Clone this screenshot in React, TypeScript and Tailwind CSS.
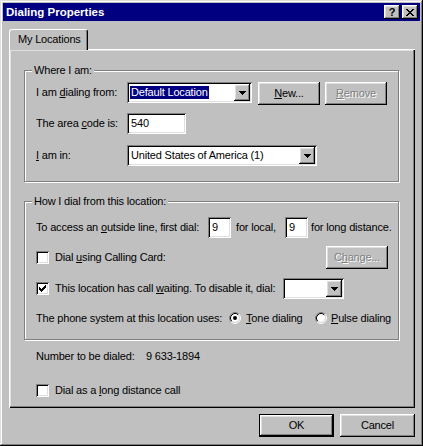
import React from "react";

const RAISED =
  "shadow-[inset_-1px_-1px_#000,inset_1px_1px_#fff,inset_-2px_-2px_#808080,inset_2px_2px_#dfdfdf]";
const SUNKEN =
  "shadow-[inset_1px_1px_#808080,inset_-1px_-1px_#fff,inset_2px_2px_#000,inset_-2px_-2px_#dfdfdf]";

const ARROW = ["XXXXXXX", ".XXXXX.", "..XXX..", "...X..."];
const CHECK = [
  "......X",
  ".....XX",
  "X...XXX",
  "XX.XXX.",
  "XXXXX..",
  ".XXX...",
  "..X....",
];
const XG = [
  "XX....XX",
  ".XX..XX.",
  "..XXXX..",
  "...XX...",
  "..XXXX..",
  ".XX..XX.",
  "XX....XX",
];

function Pix({ rows, color = "#000" }: { rows: string[]; color?: string }) {
  const w = rows[0].length;
  const h = rows.length;
  return (
    <svg width={w} height={h} viewBox={`0 0 ${w} ${h}`} shapeRendering="crispEdges">
      {rows.flatMap((r, y) =>
        r.split("").map((c, x) =>
          c === "X" ? <rect key={`${x}-${y}`} x={x} y={y} width={1} height={1} fill={color} /> : null
        )
      )}
    </svg>
  );
}

function TitleBtn({ children, className = "" }: { children: React.ReactNode; className?: string }) {
  return (
    <div
      className={`w-[16px] h-[14px] bg-[#c0c0c0] ${RAISED} flex items-center justify-center ${className}`}
    >
      {children}
    </div>
  );
}

function Btn({
  w,
  children,
  disabled,
  def,
  className = "",
}: {
  w: string;
  children: React.ReactNode;
  disabled?: boolean;
  def?: boolean;
  className?: string;
}) {
  const bevel = def
    ? "shadow-[inset_0_0_0_1px_#000,inset_-2px_-2px_#000,inset_2px_2px_#fff,inset_-3px_-3px_#808080,inset_3px_3px_#dfdfdf]"
    : RAISED;
  return (
    <div
      className={`${w} h-[23px] shrink-0 bg-[#c0c0c0] ${bevel} flex items-center justify-center ${
        disabled ? "text-[#808080] [text-shadow:1px_1px_0_#fff]" : "text-black"
      } ${className}`}
    >
      <span>{children}</span>
    </div>
  );
}

function Edit({ w, children }: { w: string; children?: React.ReactNode }) {
  return (
    <div className={`${w} h-[21px] shrink-0 bg-white ${SUNKEN} flex items-center pl-[4px]`}>
      {children}
    </div>
  );
}

function Combo({ w, children }: { w: string; children?: React.ReactNode }) {
  return (
    <div className={`${w} h-[21px] shrink-0 bg-white ${SUNKEN} p-[2px] flex`}>
      <div className="flex-1 flex items-center pl-[1px] overflow-hidden whitespace-nowrap">
        {children}
      </div>
      <div className={`w-[16px] h-full bg-[#c0c0c0] ${RAISED} flex items-center justify-center`}>
        <Pix rows={ARROW} />
      </div>
    </div>
  );
}

function Checkbox({ checked }: { checked?: boolean }) {
  return (
    <div className={`w-[13px] h-[13px] shrink-0 bg-white ${SUNKEN} flex items-center justify-center`}>
      {checked ? <Pix rows={CHECK} /> : null}
    </div>
  );
}

function Radio({ checked }: { checked?: boolean }) {
  return (
    <svg width="12" height="12" viewBox="0 0 12 12" className="shrink-0">
      <path d="M2.11 9.89 A5.5 5.5 0 0 1 9.89 2.11" stroke="#808080" fill="none" />
      <path d="M9.89 2.11 A5.5 5.5 0 0 1 2.11 9.89" stroke="#fff" fill="none" />
      <circle cx="6" cy="6" r="4" fill="#fff" />
      <path d="M2.82 9.18 A4.5 4.5 0 0 1 9.18 2.82" stroke="#000" fill="none" />
      <path d="M9.18 2.82 A4.5 4.5 0 0 1 2.82 9.18" stroke="#dfdfdf" fill="none" />
      {checked ? <circle cx="6" cy="6" r="2" fill="#000" /> : null}
    </svg>
  );
}

function Group({
  label,
  className = "",
  children,
}: {
  label: string;
  className?: string;
  children: React.ReactNode;
}) {
  return (
    <div
      className={`relative w-[375px] border border-[#808080] shadow-[inset_1px_1px_#fff,1px_1px_#fff] ${className}`}
    >
      <span className="absolute left-[7px] -top-[7px] px-[2px] bg-[#c0c0c0] leading-[13px] whitespace-nowrap">
        {label}
      </span>
      {children}
    </div>
  );
}

function Label({ w, children }: { w: string; children: React.ReactNode }) {
  return <div className={`${w} h-[21px] shrink-0 flex items-center whitespace-nowrap`}>{children}</div>;
}

export default function App() {
  return (
    <div
      className={`font-['Liberation_Sans',Arial,sans-serif] text-[11px] leading-[13px] tracking-[-0.18px] text-black w-[423px] h-[446px] bg-[#c0c0c0] p-[3px] shadow-[inset_-1px_-1px_#000,inset_1px_1px_#dfdfdf,inset_-2px_-2px_#808080,inset_2px_2px_#fff] flex flex-col`}
    >
      {/* Title bar */}
      <div className="h-[18px] shrink-0 bg-[#000080] flex items-center pl-[3px] pr-[2px]">
        <span className="text-white font-bold text-[11.5px] tracking-normal flex-1 whitespace-nowrap">
          Dialing Properties
        </span>
        <TitleBtn>
          <span className="font-bold text-[11px] leading-[11px] tracking-normal text-black">?</span>
        </TitleBtn>
        <TitleBtn className="ml-[2px]">
          <Pix rows={XG} />
        </TitleBtn>
      </div>

      <div className="pl-[6px] pr-[5px] mt-[8px] flex flex-col">
        {/* Tab */}
        <div className="relative z-10 -mb-px h-[21px] w-[79px] bg-[#c0c0c0] border-l border-t border-r border-l-white border-t-white border-r-black rounded-t-[3px] shadow-[inset_-1px_0_#808080] flex items-center pl-[8px] pb-[1px]">
          My Locations
        </div>

        {/* Panel */}
        <div className="h-[359px] bg-[#c0c0c0] shadow-[inset_1px_1px_#fff,inset_-1px_-1px_#000,inset_-2px_-2px_#808080,inset_2px_2px_#dfdfdf] pl-[15px] pt-[21px] flex flex-col">
          <Group label="Where I am:" className="h-[112px] pl-[11px] pt-[11px]">
            <div className="flex items-start">
              <Label w="w-[91px]">
                <span>
                  I am <u>d</u>ialing from:
                </span>
              </Label>
              <Combo w="w-[125px]">
                <span className="bg-[#000080] text-white px-[1px] h-[13px] leading-[13px]">
                  Default Location
                </span>
              </Combo>
              <Btn w="w-[62px]" className="ml-[6px]">
                <u>N</u>ew...
              </Btn>
              <Btn w="w-[62px]" className="ml-[5px]" disabled>
                <u>R</u>emove
              </Btn>
            </div>
            <div className="flex items-start mt-[8px]">
              <Label w="w-[91px]">
                <span>
                  The area <u>c</u>ode is:
                </span>
              </Label>
              <Edit w="w-[59px]">540</Edit>
            </div>
            <div className="flex items-start mt-[11px]">
              <Label w="w-[91px]">
                <span>
                  <u>I</u> am in:
                </span>
              </Label>
              <Combo w="w-[190px]">
                <span className="pl-[1px]">United States of America (1)</span>
              </Combo>
            </div>
          </Group>

          <Group
            label="How I dial from this location:"
            className="mt-[19px] h-[139px] pl-[11px] pr-[10px] pt-[15px]"
          >
            <div className="flex items-center h-[21px]">
              <span className="w-[172px] shrink-0 whitespace-nowrap">
                To access an <u>o</u>utside line, first dial:
              </span>
              <Edit w="w-[23px]">9</Edit>
              <span className="ml-[5px] w-[49px] shrink-0 whitespace-nowrap">for local,</span>
              <Edit w="w-[23px]">9</Edit>
              <span className="ml-[3px] whitespace-nowrap">for long distance.</span>
            </div>
            <div className="flex items-center h-[23px] mt-[8px]">
              <Checkbox />
              <span className="ml-[6px] flex-1 whitespace-nowrap">
                Dial <u>u</u>sing Calling Card:
              </span>
              <Btn w="w-[62px]" disabled>
                C<u>h</u>ange...
              </Btn>
            </div>
            <div className="flex items-center h-[21px] mt-[9px]">
              <Checkbox checked />
              <span className="ml-[6px] w-[228px] shrink-0 whitespace-nowrap">
                This location has call <u>w</u>aiting. To disable it, dial:
              </span>
              <Combo w="w-[61px]" />
            </div>
            <div className="flex items-center h-[16px] mt-[11px]">
              <span className="w-[193px] shrink-0 whitespace-nowrap">
                The phone system at this location uses:
              </span>
              <Radio checked />
              <span className="ml-[5px] w-[69px] shrink-0 whitespace-nowrap">
                <u>T</u>one dialing
              </span>
              <Radio />
              <span className="ml-[4px] whitespace-nowrap">
                <u>P</u>ulse dialing
              </span>
            </div>
          </Group>

          <div className="mt-[8px] h-[16px] pl-[12px] flex items-center">
            <span className="w-[110px] shrink-0 whitespace-nowrap">Number to be dialed:</span>
            <span>9 633-1894</span>
          </div>
          <div className="mt-[18px] h-[16px] pl-[12px] flex items-center">
            <Checkbox />
            <span className="ml-[6px] whitespace-nowrap">
              Dial as a <u>l</u>ong distance call
            </span>
          </div>
        </div>

        {/* Buttons */}
        <div className="mt-[6px] flex justify-end gap-[6px]">
          <Btn w="w-[75px]" def>
            OK
          </Btn>
          <Btn w="w-[75px]">Cancel</Btn>
        </div>
      </div>
    </div>
  );
}
